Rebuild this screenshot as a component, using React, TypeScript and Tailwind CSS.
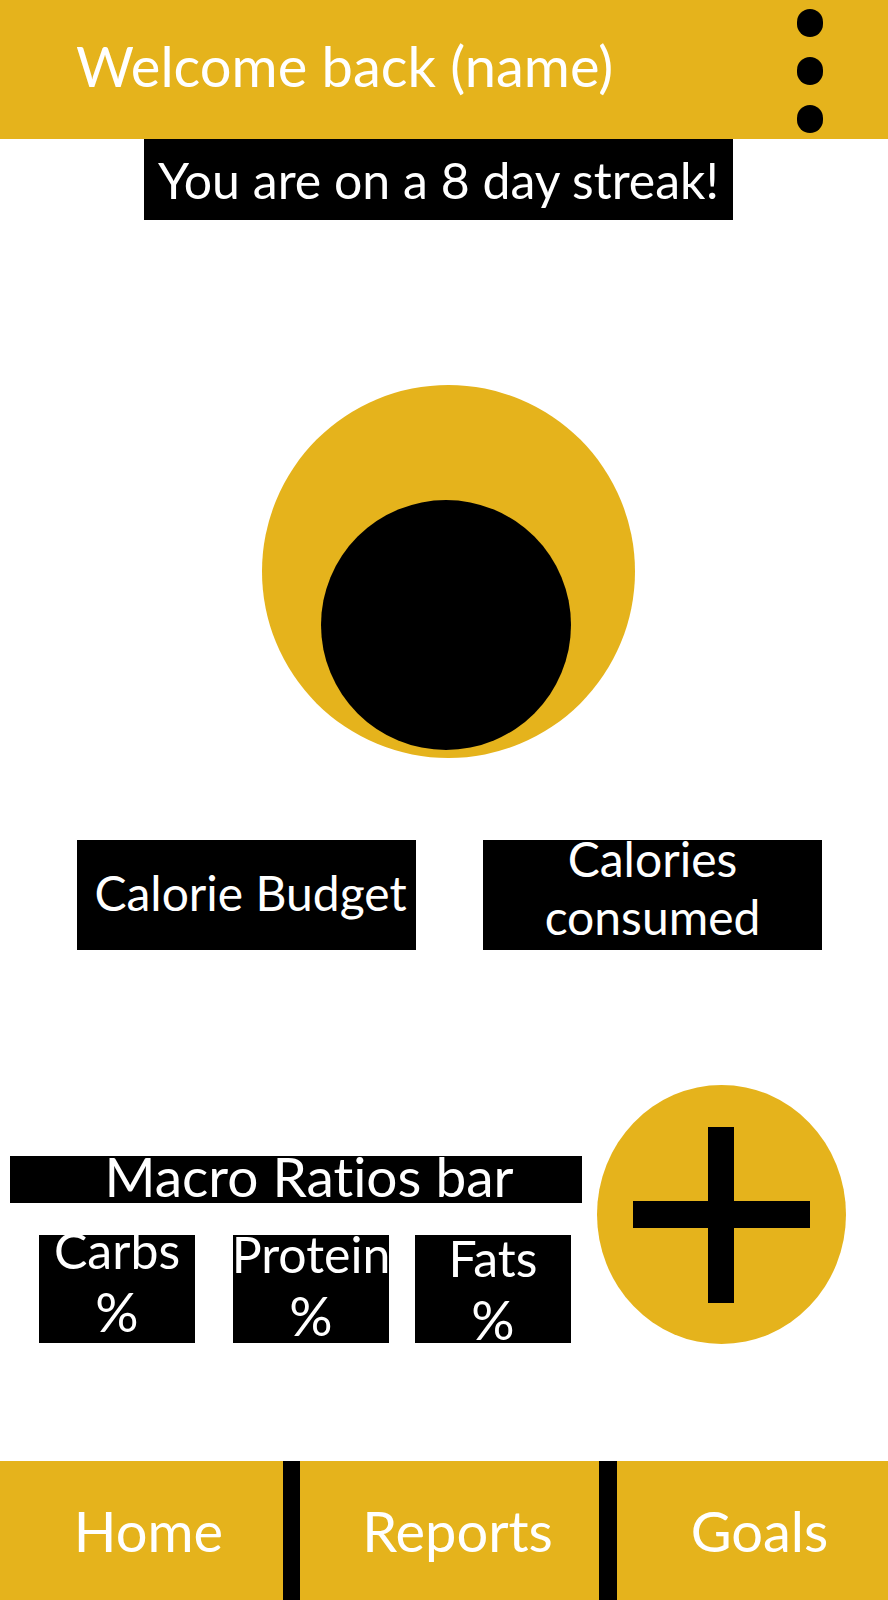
import React from 'react';

const font = { fontFamily: 'Lato, "Open Sans", sans-serif' };

export default function App() {
  return (
    <div className="flex flex-col w-[888px] h-[1600px] bg-white overflow-hidden [font-variant-ligatures:none]" style={font}>
      {/* Header */}
      <div className="flex items-center justify-between h-[139px] bg-[#e5b31c] pl-[76px] pr-[65px]">
        <h1 className="text-white text-[56px] leading-none pb-[8px]">Welcome back (name)</h1>
        <div className="flex flex-col gap-[20px] pt-[2px]">
          <span className="block w-[26px] h-[28px] rounded-full bg-black" />
          <span className="block w-[26px] h-[28px] rounded-full bg-black" />
          <span className="block w-[26px] h-[28px] rounded-full bg-black" />
        </div>
      </div>

      {/* Streak */}
      <div className="ml-[144px] w-[589px] h-[81px] bg-black flex items-center justify-center">
        <span className="text-white text-[50px] leading-none">You are on a 8 day streak!</span>
      </div>

      {/* Calorie ring */}
      <div className="ml-[262px] mt-[165px] w-[373px] h-[373px]">
        <svg width="373" height="373" viewBox="0 0 373 373">
          <circle cx="186.5" cy="186.5" r="186.5" fill="#e5b31c" />
          <circle cx="184" cy="240" r="125" fill="#000" />
        </svg>
      </div>

      {/* Calorie boxes */}
      <div className="flex mt-[82px] pl-[77px] gap-[67px]">
        <div className="w-[339px] h-[110px] bg-black flex items-center justify-center pl-[8px] pb-[4px]">
          <span className="text-white text-[48px] leading-none">Calorie Budget</span>
        </div>
        <div className="w-[339px] h-[110px] bg-black flex flex-col items-center justify-start overflow-visible">
          <span className="text-white text-[48px] leading-[58px] -mt-[10px] text-center">
            Calories
            <br />
            consumed
          </span>
        </div>
      </div>

      {/* Macros + add */}
      <div className="flex mt-[135px] h-[259px]">
        <div className="flex flex-col w-[572px] ml-[10px] pt-[71px]">
          <div className="h-[47px] bg-black flex items-center justify-center overflow-visible pl-[26px]">
            <span className="text-white text-[55px] leading-none -mt-[6px]">Macro Ratios bar</span>
          </div>
          <div className="flex mt-[32px] pl-[29px] gap-[38px]">
            {[
              ['Carbs', 'ml-0', '-mt-[16px]'],
              ['Protein', 'ml-0', '-mt-[12px]'],
              ['Fats', 'ml-[-12px]', '-mt-[8px]'],
            ].map(([label, m, t]) => (
              <div
                key={label}
                className={`w-[156px] h-[108px] bg-black flex flex-col items-center text-white text-[50px] leading-[62px] ${m}`}
              >
                <span className={t}>{label}</span>
                <span className="text-[54px]">%</span>
              </div>
            ))}
          </div>
        </div>
        <div className="ml-[15px] w-[249px] h-[259px] rounded-[50%] bg-[#e5b31c] flex items-center justify-center">
          <svg width="177" height="176" viewBox="0 0 177 176">
            <rect x="75" y="0" width="26" height="176" fill="#000" />
            <rect x="0" y="74" width="177" height="27" fill="#000" />
          </svg>
        </div>
      </div>

      {/* Bottom nav */}
      <div className="mt-auto flex h-[139px] bg-[#e5b31c]">
        <div className="w-[283px] flex items-center justify-center pl-[14px]">
          <span className="text-white text-[56px] leading-none">Home</span>
        </div>
        <div className="w-[17px] bg-black" />
        <div className="w-[299px] flex items-center justify-center pl-[16px]">
          <span className="text-white text-[56px] leading-none">Reports</span>
        </div>
        <div className="w-[18px] bg-black" />
        <div className="flex-1 flex items-center justify-center pl-[14px]">
          <span className="text-white text-[56px] leading-none">Goals</span>
        </div>
      </div>
    </div>
  );
}
